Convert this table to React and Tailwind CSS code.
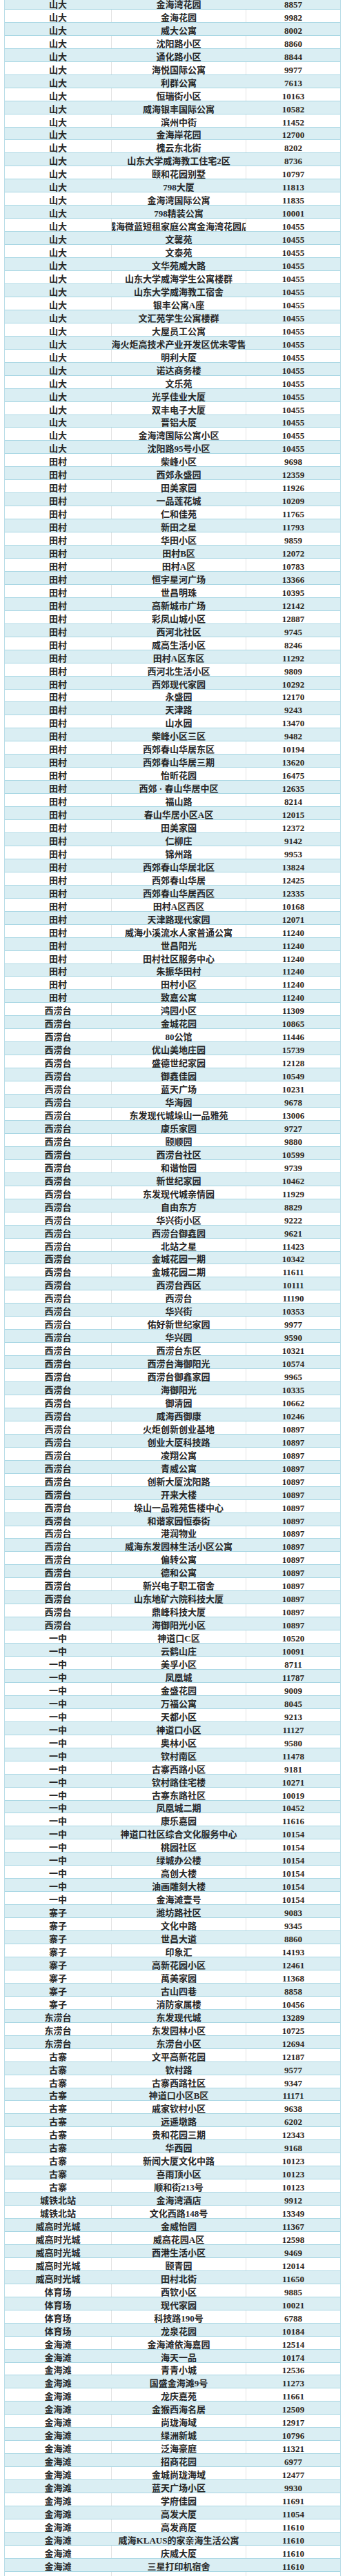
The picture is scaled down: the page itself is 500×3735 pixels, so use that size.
import React from "react";

const groups = [
  ["山大", "金海湾花园:8857,金海花园:9982,威大公寓:8002,沈阳路小区:8860,通化路小区:8844,海悦国际公寓:9977,利群公寓:7613,恒瑞街小区:10163,威海银丰国际公寓:10582,滨州中街:11452,金海岸花园:12700,槐云东北街:8202,山东大学威海教工住宅2区:8736,颐和花园别墅:10797,798大厦:11813,金海湾国际公寓:11835,798精装公寓:10001,威海微蓝短租家庭公寓金海湾花园店:10455,文馨苑:10455,文泰苑:10455,文华苑威大路:10455,山东大学威海学生公寓楼群:10455,山东大学威海教工宿舍:10455,银丰公寓A座:10455,文汇苑学生公寓楼群:10455,大屋员工公寓:10455,威海火炬高技术产业开发区优未零售店:10455,明利大厦:10455,诺达商务楼:10455,文乐苑:10455,光孚佳业大厦:10455,双丰电子大厦:10455,晋铝大厦:10455,金海湾国际公寓小区:10455,沈阳路95号小区:10455"],
  ["田村", "柴峰小区:9698,西郊永盛园:12359,田美家园:11926,一品莲花城:10209,仁和佳苑:11765,新田之星:11793,华田小区:9859,田村B区:12072,田村A区:10783,恒宇星河广场:13366,世昌明珠:10395,高新城市广场:12142,彩凤山城小区:12887,西河北社区:9745,威高生活小区:8246,田村A区东区:11292,西河北生活小区:9809,西郊现代家园:10292,永盛园:12170,天津路:9243,山水园:13470,柴峰小区三区:9482,西郊春山华居东区:10194,西郊春山华居三期:13620,怡昕花园:16475,西郊 · 春山华居中区:12635,福山路:8214,春山华居小区A区:12015,田美家園:12372,仁柳庄:9142,锦州路:9953,西郊春山华居北区:13824,西郊春山华居:12425,西郊春山华居西区:12335,田村A区西区:10168,天津路现代家园:12071,威海小溪流水人家普通公寓:11240,世昌阳光:11240,田村社区服务中心:11240,朱振华田村:11240,田村小区:11240,致嘉公寓:11240"],
  ["西涝台", "鸿园小区:11309,金城花园:10865,80公馆:11446,优山美地庄园:15739,盛德世纪家园:12128,御鑫佳园:10549,蓝天广场:10231,华海园:9678,东发现代城垛山一品雅苑:13006,康乐家园:9727,颐顺园:9880,西涝台社区:10599,和谐怡园:9739,新世纪家园:10462,东发现代城亲情园:11929,自由东方:8829,华兴街小区:9222,西涝台御鑫园:9621,北站之星:11423,金城花园一期:10342,金城花园二期:11611,西涝台西区:10111,西涝台:11190,华兴街:10353,佑好新世纪家园:9977,华兴园:9590,西涝台东区:10321,西涝台海御阳光:10574,西涝台御鑫家园:9965,海御阳光:10335,御清园:10662,威海西御康:10246,火炬创新创业基地:10897,创业大厦科技路:10897,凌翔公寓:10897,青威公寓:10897,创新大厦沈阳路:10897,开来大楼:10897,垛山一品雅苑售楼中心:10897,和谐家园恒泰街:10897,港润物业:10897,威海东发园林生活小区公寓:10897,偏转公寓:10897,德和公寓:10897,新兴电子职工宿舍:10897,山东地矿六院科技大厦:10897,鼎峰科技大厦:10897,海御阳光小区:10897"],
  ["一中", "神道口C区:10520,云鹤山庄:10091,美孚小区:8711,凤凰城:11787,金盛花园:9009,万福公寓:8045,天都小区:9213,神道口小区:11127,奥林小区:9580,钦村南区:11478,古寨西路小区:9181,钦村路住宅楼:10271,古寨东路社区:10019,凤凰城二期:10452,康乐嘉园:11616,神道口社区综合文化服务中心:10154,桃园社区:10154,绿城办公楼:10154,高创大楼:10154,油画雕刻大楼:10154,金海滩壹号:10154"],
  ["寨子", "潍坊路社区:9083,文化中路:9345,世昌大道:8860,印象汇:14193,高新花园小区:12461,萬美家园:11368,古山四巷:8858,消防家属楼:10456"],
  ["东涝台", "东发现代城:13289,东发园林小区:10725,东涝台小区:12694"],
  ["古寨", "文平高新花园:12187,钦村路:9577,古寨西路社区:9347,神道口小区B区:11171,戚家钦村小区:9638,远遥墩路:6202,贵和花园三期:12343,华西园:9168,新闻大厦文化中路:10123,喜雨顶小区:10123,顺和街213号:10123"],
  ["城铁北站", "金海湾酒店:9912,文化西路148号:13349"],
  ["威高时光城", "金威怡园:11367,威高花园A区:12598,西港生活小区:9469,颐青园:12014,田村北街:11650"],
  ["体育场", "西钦小区:9885,现代家园:10021,科技路190号:6788,龙泉花园:10184"],
  ["金海滩", "金海滩依海嘉园:12514,海天一品:10174,青青小城:12536,国盛金海滩9号:11273,龙庆嘉苑:11661,金猴西海名居:12509,尚珑海域:12917,绿洲新城:10796,泛海豪庭:11321,招商花园:6977,金城尚珑海域:12477,蓝天广场小区:9930,学府佳园:11691,高发大厦:11054,高发商厦:11610,威海KLAUS的家亲海生活公寓:11610,庆威大厦:11610,三星打印机宿舍:11610"],
];

const rows = [];
groups.forEach(([d, s]) => {
  s.split(",").forEach((item) => {
    const [n, p] = item.split(":");
    rows.push([d, n, p]);
  });
});
rows.push(["", "", ""]);

function Row({ r, i }) {
  const blue = i % 2 === 0;
  const bg = blue ? "bg-[#daeef3]" : "bg-white";
  const div = blue ? "border-[#daeef3]" : "border-[#e3e3e3]";
  const cell = "flex justify-center items-end leading-[12px] whitespace-nowrap";
  const clip = r[1].length > 14 ? "overflow-hidden" : "";
  return (
    <div className={`flex h-[18.96px] shrink-0 border-b border-[#a9d7e4] ${bg}`}>
      <div className={`${cell} w-[155px] border-r ${div}`}>{r[0]}</div>
      <div className={`${cell} ${clip} w-[195px] border-r ${div}`}>{r[1]}</div>
      <div className={`${cell} flex-1`}>{r[2]}</div>
    </div>
  );
}

export default function App() {
  return (
    <div className="w-[500px] h-[3735px] overflow-hidden bg-white">
      <div
        className="-mt-[5px] ml-[6px] w-[488px] flex flex-col border-l border-r border-[#b9dde8] text-[13px] font-bold text-[#262626]"
        style={{ fontFamily: '"Liberation Serif", "Noto Sans CJK SC", serif' }}
      >
        {rows.map((r, i) => (
          <Row key={i} r={r} i={i} />
        ))}
      </div>
    </div>
  );
}
